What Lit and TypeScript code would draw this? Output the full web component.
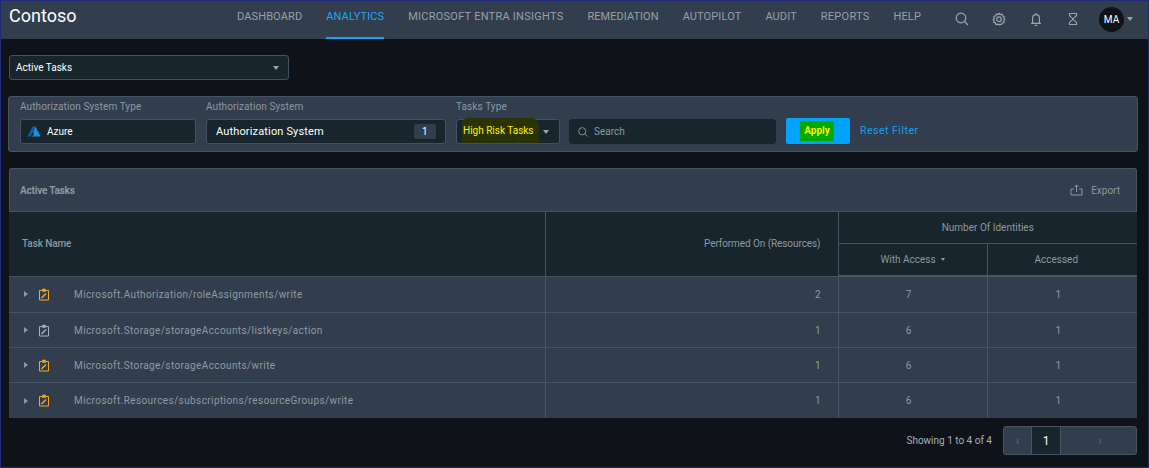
import { LitElement, html, css, svg, TemplateResult } from "lit";
import { customElement } from "lit/decorators.js";

const NAV = [
  "DASHBOARD",
  "ANALYTICS",
  "MICROSOFT ENTRA INSIGHTS",
  "REMEDIATION",
  "AUTOPILOT",
  "AUDIT",
  "REPORTS",
  "HELP",
];

const ROWS = [
  { name: "Microsoft.Authorization/roleAssignments/write", on: 2, access: 7, accessed: 1, high: true },
  { name: "Microsoft.Storage/storageAccounts/listkeys/action", on: 1, access: 6, accessed: 1, high: false },
  { name: "Microsoft.Storage/storageAccounts/write", on: 1, access: 6, accessed: 1, high: true },
  { name: "Microsoft.Resources/subscriptions/resourceGroups/write", on: 1, access: 6, accessed: 1, high: true },
];

const icon = (body: TemplateResult, size = 16): TemplateResult => html`
  <svg class="icon" width=${size} height=${size} viewBox="0 0 16 16" fill="none" stroke="currentColor" stroke-width="1.2">
    ${body}
  </svg>
`;

const searchIcon = svg`<circle cx="7" cy="7" r="4.8" /><path d="M10.500 10.500 14 14" />`;
const gearIcon = svg`<path d="M8 2.300 9.300 3.500 11 3.200 11.600 4.800 13.200 5.500 12.800 7.100 13.800 8.500 12.700 9.800 13 11.500 11.300 12 10.500 13.500 8.800 13.200 8 14 6.700 13.200 5 13.500 4.400 12 2.800 11.400 3.200 9.800 2.200 8.400 3.300 7 3 5.300 4.600 4.800 5.300 3.200 7 3.500z" /><circle cx="8" cy="8.200" r="2.300" />`;
const bellIcon = svg`<path d="M3 12.300h10M4.600 12.300V7a3.400 3.400 0 0 1 6.800 0v5.300M6.800 14.300h2.400M8 2v1.600" />`;
const hourglassIcon = svg`<path d="M4.500 2.500h7v1.800c0 1.400-3.500 2.600-3.500 3.700s3.500 2.300 3.500 3.700v1.800h-7v-1.800C4.500 10.300 8 9.100 8 8S4.500 5.700 4.500 4.300z" />`;

@customElement("app-root")
export class AppRoot extends LitElement {
  static styles = css`
    :host {
      display: block;
      width: 1149px;
      height: 468px;
      box-sizing: border-box;
      border: 1px solid #1f2a7c;
      background: #0f1319;
      font-family: Roboto, "Liberation Sans", sans-serif;
      font-size: 10px;
      color: #9aa5ae;
      overflow: hidden;
    }

    .icon {
      display: block;
      flex: none;
    }

    header {
      display: flex;
      align-items: stretch;
      height: 38px;
      background: #323e4d;
      padding: 0 15px 0 8px;
    }

    .logo {
      font-size: 18px;
      color: #fff;
      line-height: 30px;
      width: 228px;
    }

    nav {
      display: flex;
      gap: 24px;
    }

    nav a {
      font-size: 11px;
      letter-spacing: 0.12px;
      line-height: 32px;
      color: #96a1aa;
      white-space: nowrap;
      border-bottom: 2px solid transparent;
    }

    nav a:nth-child(3) {
      letter-spacing: 0.25px;
    }

    nav a:nth-child(4) {
      letter-spacing: 0.05px;
    }

    nav a:nth-child(7) {
      letter-spacing: 0.25px;
    }

    nav a.active {
      color: #1ca7f4;
      border-bottom-color: #0ea5fa;
    }

    .tools {
      display: flex;
      align-items: center;
      margin-left: auto;
      gap: 21px;
      color: #9aa5ae;
    }

    .tools .icon {
      margin-top: -2px;
    }

    .user {
      display: flex;
      align-items: center;
      gap: 3px;
      margin-left: -3px;
      margin-top: -2px;
    }

    .avatar {
      width: 25px;
      height: 25px;
      border-radius: 50%;
      background: #0f1319;
      color: #fff;
      font-size: 10px;
      display: flex;
      align-items: center;
      justify-content: center;
    }

    .caret {
      width: 0;
      height: 0;
      border: 3px solid transparent;
      border-top: 4px solid #9aa5ae;
      border-bottom: 0;
      flex: none;
    }

    main {
      display: flex;
      flex-direction: column;
      padding: 16px 10px 0 7px;
    }

    .field {
      display: flex;
      align-items: center;
      box-sizing: border-box;
      height: 25px;
      background: #18252c;
      border: 1px solid #435260;
      border-radius: 3px;
      color: #fff;
      font-size: 10px;
      padding: 0 6px;
    }

    .report {
      width: 280px;
      justify-content: space-between;
      margin-left: 1px;
      padding: 0 9px 0 6px;
    }

    .filters {
      display: flex;
      align-items: flex-end;
      box-sizing: border-box;
      height: 56px;
      margin-top: 16px;
      padding: 0 11px 7px 11px;
      background: #323e4d;
      border: 1px solid #465563;
      border-radius: 3px;
    }

    .group {
      display: flex;
      flex-direction: column;
      gap: 7px;
    }

    .group label {
      font-size: 10px;
      letter-spacing: 0.1px;
      color: #8c98a2;
      line-height: 10px;
    }

    .azure {
      width: 176px;
      margin-right: 10px;
      gap: 6px;
    }

    .system {
      width: 240px;
      margin-right: 10px;
      justify-content: space-between;
      padding: 0 9px;
      font-size: 11px;
      letter-spacing: 0.15px;
    }

    .count {
      width: 22px;
      height: 15px;
      border-radius: 2px;
      background: #323e4d;
      font-size: 10px;
      display: flex;
      align-items: center;
      justify-content: center;
    }

    .type {
      width: 104px;
      margin-right: 9px;
      justify-content: space-between;
      padding: 0 10px 0 5px;
      color: #ffee00;
    }

    .marker {
      background: #2a3305;
      border-radius: 6px 8px 2px 2px;
      line-height: 12px;
      padding: 7px 5px 6px 1px;
      margin: -2px -5px 0 0;
      white-space: nowrap;
    }

    .search {
      width: 207px;
      margin-right: 10px;
      gap: 5px;
      border-color: #18252c;
      color: #8c98a2;
      padding: 0 7px;
    }

    .apply {
      display: flex;
      align-items: center;
      justify-content: center;
      width: 64px;
      height: 26px;
      padding-right: 2px;
      box-sizing: border-box;
      background: #00a3ff;
      border-radius: 2px;
      font-size: 10px;
      font-weight: 700;
      color: #ffee00;
    }

    .apply span {
      background: #00aa00;
      padding: 4px;
      line-height: 12px;
    }

    .reset {
      margin-left: 10px;
      font-size: 10.5px;
      letter-spacing: 0.5px;
      color: #14a1f0;
      line-height: 26px;
    }

    .grid {
      margin: 16px 0 0 1px;
      width: 1128px;
    }

    .grid-head {
      display: flex;
      align-items: center;
      justify-content: space-between;
      box-sizing: border-box;
      height: 43px;
      padding: 0 16px 0 10px;
      background: #323e4d;
      border: 1px solid #465563;
      border-bottom: 0;
      border-radius: 3px 3px 0 0;
      font-weight: 700;
      font-size: 10px;
      color: #8c98a2;
    }

    .grid-title {
      letter-spacing: -0.2px;
    }

    .export {
      display: flex;
      align-items: center;
      gap: 8px;
      font-weight: 400;
    }

    table {
      width: 100%;
      table-layout: fixed;
      border-collapse: collapse;
    }

    .col-name {
      width: 536px;
    }

    .col-on {
      width: 293px;
    }

    .col-access {
      width: 149px;
    }

    .col-accessed {
      width: 150px;
    }

    th {
      background: #18252c;
      font-weight: 400;
      font-size: 10px;
      color: #8c98a2;
      border: 1px solid #465563;
      padding: 0;
      text-align: center;
    }

    thead tr:first-child th {
      height: 31px;
    }

    thead tr:last-child th {
      height: 31px;
      border-bottom-width: 2px;
    }

    th.name {
      text-align: left;
      padding-left: 13px;
      font-weight: 500;
      letter-spacing: -0.1px;
      border-left: 0;
    }

    th.on {
      text-align: right;
      padding-right: 17px;
      letter-spacing: -0.08px;
    }

    th.accessed {
      padding-right: 12px;
    }

    th:last-child,
    td:last-child {
      border-right: 0;
    }

    .sort {
      display: inline-block;
      margin-left: 5px;
      vertical-align: 2px;
      border: 2px solid transparent;
      border-top: 3px solid #8c98a2;
      border-bottom: 0;
    }

    td {
      height: 34px;
      padding: 0 8px 0 0;
      background: #323e4d;
      border: 1px solid #465563;
      font-size: 10px;
      color: #8f9aa4;
      text-align: center;
    }

    tbody tr:first-child td {
      height: 35px;
    }

    tbody tr:last-child td {
      height: 35px;
      border-bottom: 0;
    }

    td.name {
      border-left: 0;
      padding: 0;
      text-align: left;
      letter-spacing: 0.4px;
    }

    td.on {
      text-align: right;
      padding-right: 17px;
    }

    .task {
      display: flex;
      align-items: center;
      padding-left: 15px;
    }

    .expand {
      width: 0;
      height: 0;
      border: 3px solid transparent;
      border-left: 4px solid #8c98a2;
      border-right: 0;
      margin-right: 10px;
      flex: none;
    }

    .clip {
      color: #a5b0b9;
      margin-right: 24px;
      flex: none;
    }

    .clip.high {
      color: #f7a823;
    }

    .pager {
      display: flex;
      align-items: center;
      justify-content: flex-end;
      margin-top: 8px;
      width: 1128px;
      margin-left: 1px;
      gap: 11px;
      font-size: 10px;
      color: #a5b0b9;
    }

    .pages {
      display: flex;
      box-sizing: border-box;
      width: 134px;
      height: 29px;
      background: #323e4d;
      border: 1px solid #465563;
      border-radius: 3px;
      color: #5f6c78;
      font-size: 12px;
    }

    .pages div {
      display: flex;
      align-items: center;
      justify-content: center;
    }

    .prev {
      width: 27px;
    }

    .current {
      width: 28px;
      background: #18252c;
      border-left: 1px solid #465563;
      border-right: 1px solid #465563;
      color: #fff;
    }

    .next {
      flex: 1;
      padding-left: 3px;
      box-sizing: border-box;
    }
  `;

  private renderClip(high: boolean): TemplateResult {
    return html`
      <svg class="clip ${high ? "high" : ""}" width="12" height="13" viewBox="0 0 12 13" fill="none" stroke="currentColor">
        <path d="M4 2.500H1.500v9.500h9V2.500H8" />
        <path d="M4.500 1h3v2.500h-3z" fill="currentColor" stroke-width="0.6" />
        <path d="M3.500 10 8 5.500" stroke-width="1.400" />
      </svg>
    `;
  }

  private renderRow(r: (typeof ROWS)[number]): TemplateResult {
    return html`
      <tr>
        <td class="name">
          <div class="task">
            <span class="expand"></span>
            ${this.renderClip(r.high)}
            <span>${r.name}</span>
          </div>
        </td>
        <td class="on">${r.on}</td>
        <td>${r.access}</td>
        <td>${r.accessed}</td>
      </tr>
    `;
  }

  protected render(): TemplateResult {
    return html`
      <header>
        <div class="logo">Contoso</div>
        <nav>
          ${NAV.map((n) => html`<a class=${n === "ANALYTICS" ? "active" : ""}>${n}</a>`)}
        </nav>
        <div class="tools">
          ${icon(searchIcon)} ${icon(gearIcon)} ${icon(bellIcon)} ${icon(hourglassIcon)}
          <div class="user">
            <div class="avatar">MA</div>
            <span class="caret"></span>
          </div>
        </div>
      </header>

      <main>
        <div class="field report">
          <span>Active Tasks</span>
          <span class="caret"></span>
        </div>

        <section class="filters">
          <div class="group">
            <label>Authorization System Type</label>
            <div class="field azure">
              <svg width="14" height="11" viewBox="0 0 13 11">
                <path d="M5 0.500h3L3 10.500H0z" fill="#0a5fb0" />
                <path d="M8 0.500 13 10.500H4l2.500-1.500L5.800 5z" fill="#1b8fe0" />
              </svg>
              <span>Azure</span>
            </div>
          </div>
          <div class="group">
            <label>Authorization System</label>
            <div class="field system">
              <span>Authorization System</span>
              <span class="count">1</span>
            </div>
          </div>
          <div class="group">
            <label>Tasks Type</label>
            <div class="field type">
              <span class="marker">High Risk Tasks</span>
              <span class="caret"></span>
            </div>
          </div>
          <div class="group">
            <div class="field search">
              ${icon(searchIcon, 12)}
              <span>Search</span>
            </div>
          </div>
          <div class="apply"><span>Apply</span></div>
          <div class="reset">Reset Filter</div>
        </section>

        <section class="grid">
          <div class="grid-head">
            <span class="grid-title">Active Tasks</span>
            <div class="export">
              <svg class="icon" width="13" height="12" viewBox="0 0 13 12" fill="none" stroke="currentColor">
                <path d="M4 5H1v6h11V5H9M6.500 8V1M4.500 3l2-2 2 2" />
              </svg>
              <span>Export</span>
            </div>
          </div>
          <table>
            <colgroup>
              <col class="col-name" />
              <col class="col-on" />
              <col class="col-access" />
              <col class="col-accessed" />
            </colgroup>
            <thead>
              <tr>
                <th class="name" rowspan="2">Task Name</th>
                <th class="on" rowspan="2">Performed On (Resources)</th>
                <th colspan="2">Number Of Identities</th>
              </tr>
              <tr>
                <th>With Access<span class="sort"></span></th>
                <th class="accessed">Accessed</th>
              </tr>
            </thead>
            <tbody>
              ${ROWS.map((r) => this.renderRow(r))}
            </tbody>
          </table>
        </section>

        <div class="pager">
          <span>Showing 1 to 4 of 4</span>
          <div class="pages">
            <div class="prev">‹</div>
            <div class="current">1</div>
            <div class="next">›</div>
          </div>
        </div>
      </main>
    `;
  }
}

declare global {
  interface HTMLElementTagNameMap {
    "app-root": AppRoot;
  }
}
